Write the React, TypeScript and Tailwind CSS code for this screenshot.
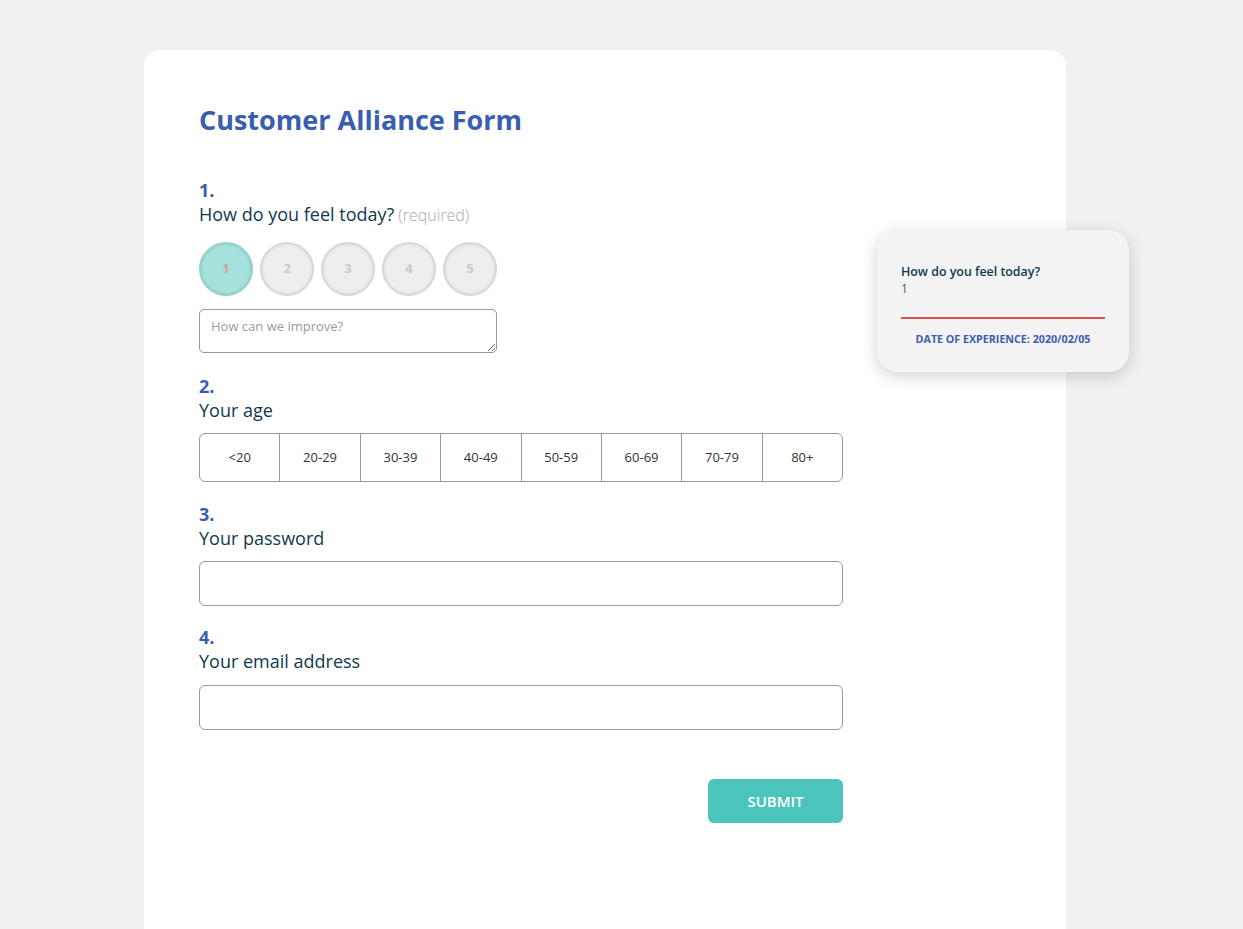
import { useState } from "react";

const ages = ["<20", "20-29", "30-39", "40-49", "50-59", "60-69", "70-79", "80+"];

function Question({ n, label, extra }: { n: number; label: string; extra?: string }) {
  return (
    <div>
      <p className="text-[18px] font-bold leading-6 text-[#3a5db0]">{n}.</p>
      <p className="text-[18px] leading-6 text-[#0f3a4d]">
        {label}
        {extra && <span className="ml-1 text-[16px] font-light text-[#a8a8a8]">{extra}</span>}
      </p>
    </div>
  );
}

export default function App() {
  const [rating, setRating] = useState(1);

  return (
    <div className="min-h-screen overflow-hidden bg-[#f1f1f1] pt-[50px] font-['Open_Sans',sans-serif]">
      <div className="relative ml-[144px] w-[922px] rounded-t-[16px] bg-white pl-[55px] pt-[50px] pb-[130px]">
        <h1 className="text-[27px] font-bold leading-[40px] text-[#3a5db0]">Customer Alliance Form</h1>

        <form className="mt-[38px] w-[644px]" onSubmit={(e) => e.preventDefault()}>
          {/* question 1 */}
          <Question n={1} label="How do you feel today?" extra="(required)" />
          <div className="mt-[15px] flex gap-[7px]">
            {[1, 2, 3, 4, 5].map((v) => (
              <button
                key={v}
                type="button"
                onClick={() => setRating(v)}
                className={
                  v === rating
                    ? "flex h-[54px] w-[54px] items-center justify-center rounded-full border-2 border-[#8fd2cb] bg-[#a6e1dc] text-[13px] font-bold text-[#d49c9c] shadow-[inset_0_0_3px_rgba(0,0,0,0.15)]"
                    : "flex h-[54px] w-[54px] items-center justify-center rounded-full border-2 border-[#d8d8d8] bg-[#eeeeee] text-[13px] font-bold text-[#c9c9c9] shadow-[inset_0_0_3px_rgba(0,0,0,0.12)]"
                }
              >
                {v}
              </button>
            ))}
          </div>
          <textarea
            placeholder="How can we improve?"
            className="mt-[13px] block h-[44px] w-[298px] rounded-[5px] border border-[#999] px-[11px] py-[7px] text-[13px] leading-[18px] text-[#333] placeholder:text-[#9a9a9a] outline-none"
          />

          {/* question 2 */}
          <div className="mt-[21px]">
            <Question n={2} label="Your age" />
            <div className="mt-[11px] flex h-[49px] overflow-hidden rounded-[6px] border border-[#999]">
              {ages.map((a, i) => (
                <button
                  key={a}
                  type="button"
                  className={`flex flex-1 items-center justify-center text-[13px] text-[#333] ${i > 0 ? "border-l border-[#999]" : ""}`}
                >
                  {a}
                </button>
              ))}
            </div>
          </div>

          {/* question 3 */}
          <div className="mt-[20px]">
            <Question n={3} label="Your password" />
            <input
              type="password"
              className="mt-[11px] block h-[45px] w-full rounded-[6px] border border-[#999] px-3 text-[14px] outline-none"
            />
          </div>

          {/* question 4 */}
          <div className="mt-[19px]">
            <Question n={4} label="Your email address" />
            <input
              type="email"
              className="mt-[12px] block h-[45px] w-full rounded-[6px] border border-[#999] px-3 text-[14px] outline-none"
            />
          </div>

          <div className="mt-[49px] flex justify-end">
            <button
              type="submit"
              className="h-[44px] w-[135px] rounded-[6px] bg-[#4bc5bb] text-[15px] font-semibold uppercase text-white"
            >
              Submit
            </button>
          </div>
        </form>

        {/* summary popup */}
        <div className="absolute left-[733px] top-[180px] w-[252px] rounded-[20px] bg-[#f3f3f3] px-6 pt-[33px] pb-[26px] shadow-[0_4px_16px_rgba(0,0,0,0.18)]">
          <p className="text-[12.4px] font-semibold leading-[17px] text-[#12394d]">How do you feel today?</p>
          <p className="text-[12px] leading-[17px] text-[#44606e]">{rating}</p>
          <div className="mt-[20px] h-[2px] bg-[#d9534f]" />
          <p className="mt-[13px] text-center text-[10.7px] font-bold uppercase leading-[14px] text-[#3a5db0]">
            Date of experience: 2020/02/05
          </p>
        </div>
      </div>
    </div>
  );
}
